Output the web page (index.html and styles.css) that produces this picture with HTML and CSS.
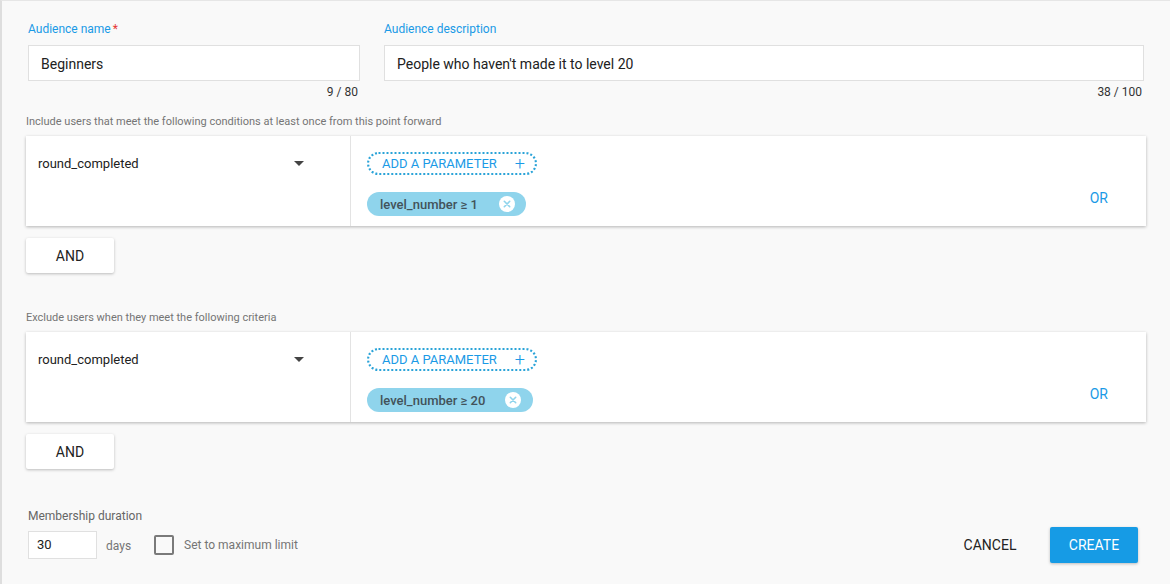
FILE: index.html
```html
<!DOCTYPE html>
<html>
<head>
<meta charset="utf-8">
<link rel="stylesheet" href="styles.css">
</head>
<body>
<div class="page">
  <div class="fields">
    <div class="field name-field">
      <label class="flabel">Audience name<span class="req">*</span></label>
      <div class="input">Beginners</div>
      <div class="counter">9 / 80</div>
    </div>
    <div class="field desc-field">
      <label class="flabel">Audience description</label>
      <div class="input">People who haven't made it to level 20</div>
      <div class="counter">38 / 100</div>
    </div>
  </div>

  <div class="section-label include-label">Include users that meet the following conditions at least once from this point forward</div>
  <div class="card">
    <div class="card-left">
      <span class="event">round_completed</span>
      <span class="arrow"></span>
    </div>
    <div class="card-right">
      <div class="params">
        <div class="add-param"><span>ADD A PARAMETER</span><span class="plus">+</span></div>
        <div class="chip"><span>level_number ≥ 1</span><span class="chip-x"><svg width="16" height="16" viewBox="0 0 16 16"><circle cx="8" cy="8" r="8" fill="#fff"/><path d="M5.3 5.3 L10.7 10.7 M10.7 5.3 L5.3 10.7" stroke="#8fd4ec" stroke-width="1.6" stroke-linecap="round"/></svg></span></div>
      </div>
      <div class="or">OR</div>
    </div>
  </div>
  <div class="and-btn">AND</div>

  <div class="section-label exclude-label">Exclude users when they meet the following criteria</div>
  <div class="card">
    <div class="card-left">
      <span class="event">round_completed</span>
      <span class="arrow"></span>
    </div>
    <div class="card-right">
      <div class="params">
        <div class="add-param"><span>ADD A PARAMETER</span><span class="plus">+</span></div>
        <div class="chip chip-wide"><span>level_number ≥ 20</span><span class="chip-x"><svg width="16" height="16" viewBox="0 0 16 16"><circle cx="8" cy="8" r="8" fill="#fff"/><path d="M5.3 5.3 L10.7 10.7 M10.7 5.3 L5.3 10.7" stroke="#8fd4ec" stroke-width="1.6" stroke-linecap="round"/></svg></span></div>
      </div>
      <div class="or">OR</div>
    </div>
  </div>
  <div class="and-btn">AND</div>

  <div class="footer">
    <div class="membership">
      <div class="mlabel">Membership duration</div>
      <div class="mrow">
        <div class="days-input">30</div>
        <span class="days">days</span>
        <span class="checkbox"></span>
        <span class="max">Set to maximum limit</span>
      </div>
    </div>
    <div class="actions">
      <div class="cancel">CANCEL</div>
      <div class="create">CREATE</div>
    </div>
  </div>
</div>
</body>
</html>
```

FILE: styles.css
```css
* { box-sizing: border-box; }
html, body { margin: 0; padding: 0; }
body {
  font-family: Roboto, "Liberation Sans", Arial, sans-serif;
  background: #f9f9f9;
  width: 1170px;
  height: 584px;
  overflow: hidden;
}
.page {
  height: 584px;
  border-left: 2px solid #dedede;
  border-top: 1px solid #e6e6e6;
  padding: 0 24px 0 24px;
  display: flex;
  flex-direction: column;
}
.fields {
  display: flex;
  gap: 24px;
  padding: 20px 2px 0 2px;
}
.field { display: flex; flex-direction: column; }
.name-field { width: 332px; }
.desc-field { flex: 1; }
.flabel {
  font-size: 12px;
  line-height: 16px;
  color: #1a9ae6;
}
.req { color: #e53935; margin-left: 2px; }
.input {
  margin-top: 8px;
  height: 36px;
  background: #fff;
  border: 1px solid #e0e0e0;
  font-size: 14px;
  line-height: 34px;
  padding: 1px 0 0 12px;
  color: #212121;
}
.counter {
  margin-top: 4px;
  font-size: 12px;
  line-height: 14px;
  text-align: right;
  padding-right: 2px;
  color: #333;
}
.section-label {
  font-size: 11px;
  line-height: 14px;
  color: #757575;
}
.include-label { margin-top: 16px; }
.exclude-label { margin-top: 38px; }
.card {
  margin-top: 7px;
  height: 90px;
  background: #fff;
  box-shadow: 0 1px 3px rgba(0,0,0,0.28);
  display: flex;
}
.card-left {
  width: 325px;
  border-right: 1px solid #e3e3e3;
  display: flex;
  align-items: flex-start;
  justify-content: space-between;
  padding: 18px 46px 0 12px;
}
.event {
  font-size: 13px;
  line-height: 20px;
  color: #212121;
}
.arrow {
  margin-top: 7px;
  width: 0;
  height: 0;
  border-left: 5px solid transparent;
  border-right: 5px solid transparent;
  border-top: 5px solid #444;
}
.card-right {
  flex: 1;
  display: flex;
  justify-content: space-between;
  align-items: flex-start;
  padding: 16px 38px 0 16px;
}
.params {
  display: flex;
  flex-direction: column;
  align-items: flex-start;
  gap: 17px;
}
.add-param {
  width: 170px;
  height: 23px;
  border: 2px dotted #2aa3d8;
  border-radius: 12px;
  display: flex;
  align-items: center;
  justify-content: space-between;
  padding: 0 10px 0 13px;
  font-size: 13px;
  color: #1a9ae6;
}
.plus { font-size: 18px; line-height: 17px; font-weight: 300; }
.chip {
  width: 159px;
  height: 24px;
  border-radius: 12px;
  background: #8fd4ec;
  display: flex;
  align-items: center;
  justify-content: space-between;
  padding: 0 11px 0 13px;
  font-size: 13px;
  font-weight: 500;
  color: #42525a;
}
.chip-wide { width: 166px; padding-right: 12px; }
.chip-x { display: flex; }
.or {
  margin-top: 38px;
  font-size: 14px;
  line-height: 16px;
  color: #1a9ae6;
}
.and-btn {
  margin-top: 12px;
  width: 88px;
  height: 35px;
  background: #fff;
  box-shadow: 0 1px 3px rgba(0,0,0,0.25);
  border-radius: 2px;
  display: flex;
  align-items: center;
  justify-content: center;
  font-size: 14px;
  color: #222;
}
.footer {
  margin-top: 39px;
  display: flex;
  justify-content: space-between;
  align-items: flex-end;
  padding-left: 2px;
  padding-right: 8px;
}
.mlabel {
  font-size: 12px;
  line-height: 16px;
  color: #666;
}
.mrow {
  margin-top: 7px;
  display: flex;
  align-items: center;
}
.days-input {
  width: 69px;
  height: 28px;
  background: #fff;
  border: 1px solid #e0e0e0;
  font-size: 13px;
  line-height: 26px;
  padding-left: 8px;
  color: #212121;
}
.days {
  margin-left: 9px;
  font-size: 12px;
  color: #757575;
  padding-top: 2px;
}
.checkbox {
  margin-left: 23px;
  width: 20px;
  height: 20px;
  border: 2px solid #7a7a7a;
  border-radius: 2px;
}
.max {
  margin-left: 10px;
  font-size: 12px;
  color: #757575;
}
.actions {
  display: flex;
  align-items: center;
  gap: 16px;
  margin-bottom: -4px;
}
.cancel {
  width: 88px;
  height: 36px;
  display: flex;
  align-items: center;
  justify-content: center;
  font-size: 14px;
  color: #222;
}
.create {
  width: 88px;
  height: 36px;
  background: #169be5;
  border-radius: 2px;
  box-shadow: 0 1px 3px rgba(0,0,0,0.25);
  display: flex;
  align-items: center;
  justify-content: center;
  font-size: 14px;
  color: #fff;
}
```
